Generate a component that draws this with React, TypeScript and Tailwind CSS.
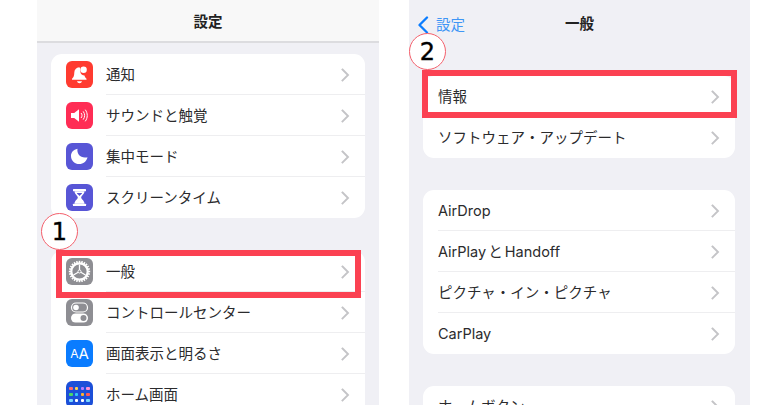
import { ReactNode } from 'react'

const FONT = 'Inter, "Noto Sans CJK JP", sans-serif'

function Chevron() {
  return (
    <svg width="9" height="14" viewBox="0 0 9 14" fill="none" className="shrink-0 mt-[1px]">
      <path d="M1.5 1.5 7 7l-5.5 5.5" stroke="#c4c4c7" strokeWidth="1.9" strokeLinecap="square" />
    </svg>
  )
}

function IconBox({ bg, children }: { bg: string; children: ReactNode }) {
  return (
    <div className={`w-[27px] h-[27px] rounded-[6px] flex items-center justify-center shrink-0 overflow-hidden ${bg}`}>
      {children}
    </div>
  )
}

function BellIcon() {
  return (
    <svg width="21" height="21" viewBox="0 0 21 21" fill="white">
      <path d="M10.2 3.2c-3 .2-4.8 2.4-4.9 5.3-.1 3-.5 4.7-2.3 6.3v1h14.5v-1c-1.1-1-1.7-2-2-3.3-2.6.2-4.6-2.200-4.1-4.900.1-1.300-.1-2.900-1.200-3.400z" />
      <circle cx="14.600" cy="5.700" r="3.200" />
      <path d="M8 17.300h5c-.3 1.200-1.300 1.900-2.500 1.900S8.300 18.500 8 17.300z" />
    </svg>
  )
}

function SoundIcon() {
  return (
    <svg width="21" height="21" viewBox="0 0 21 21" fill="none">
      <path d="M2 8h3.200L10 4.300v12.400L5.200 13H2z" fill="white" />
      <path d="M12.300 8.300c1 1.300 1 3.100 0 4.400M14.400 6.700c1.700 2.300 1.700 5.300 0 7.600M16.500 5c2.400 3.300 2.400 7.700 0 11" stroke="white" strokeWidth="1" strokeLinecap="round" />
    </svg>
  )
}

function MoonIcon() {
  return (
    <svg width="21" height="21" viewBox="0 0 21 21" fill="white">
      <path d="M8.500 2.800c-.9 4.800 2.600 9 7.800 8.800.8 0 1.500-.1 2.200-.4-.9 4-4.300 6.800-8.200 6.800-4.600 0-8.300-3.600-8.300-8.100 0-3.400 2.500-6.200 6.500-7.100z" />
    </svg>
  )
}

function HourglassIcon() {
  return (
    <svg width="21" height="21" viewBox="0 0 21 21" fill="white">
      <rect x="4" y="2" width="13" height="2.300" rx=".6" />
      <rect x="4" y="16.700" width="13" height="2.300" rx=".6" />
      <path d="M5.500 4.300h10c0 3.200-3.300 4.300-3.300 6.200s3.300 3 3.300 6.200h-10c0-3.200 3.300-4.300 3.300-6.200S5.500 7.500 5.500 4.300z" />
      <path d="M7.800 6h5.400c-.5 1.400-2.700 2.300-2.700 3.300 0-1-2.200-1.900-2.700-3.300z" fill="#5856d6" />
    </svg>
  )
}

function GearIcon() {
  const teeth = Array.from({ length: 24 }, (_, i) => i * 15)
  return (
    <svg width="25" height="25" viewBox="0 0 25 25" fill="none">
      {teeth.map(a => (
        <rect key={a} x="11.700" y="1.800" width="1.600" height="3" fill="white" transform={`rotate(${a} 12.500 12.500)`} />
      ))}
      <circle cx="12.500" cy="12.500" r="8.200" stroke="white" strokeWidth="2.200" />
      <circle cx="12.500" cy="12.500" r="1.500" stroke="white" strokeWidth="1" />
      <path d="M12.500 11V5.500M11.200 13.300l-4.700 2.700M13.800 13.300l4.700 2.700" stroke="white" strokeWidth="1.300" />
    </svg>
  )
}

function ToggleIcon() {
  return (
    <svg width="21" height="23" viewBox="0 0 21 23" fill="none">
      <rect x="2.500" y="2" width="16" height="9" rx="4.500" stroke="white" strokeWidth="1.200" />
      <circle cx="7" cy="6.500" r="2.800" fill="white" />
      <rect x="2" y="12.500" width="17" height="9" rx="4.500" fill="white" />
      <circle cx="14.500" cy="17" r="3" fill="#8e8e93" />
    </svg>
  )
}

function HomeIcon() {
  const colors = ['#ff6b6b', '#ffd24d', '#b47cff', '#ff8fd0', '#4cd964', '#35c7f5', '#ffb02e', '#ff5a5a', '#7ad7ff', '#ffffff', '#ffffff', '#7ad7ff']
  return (
    <div className="grid grid-cols-4 gap-x-[2px] gap-y-[2.500px] w-[21px] h-[21px] content-center">
      {colors.map((c, i) => (
        <span key={i} className="w-[3.500px] h-[3.500px] rounded-[1px]" style={{ backgroundColor: c }} />
      ))}
    </div>
  )
}

function Row({ icon, label, last, inset }: { icon?: ReactNode; label: string; last?: boolean; inset: string }) {
  return (
    <div className="flex items-stretch h-[41px]">
      {icon && <div className="w-[55px] pl-[15px] flex items-center shrink-0">{icon}</div>}
      <div className={`flex-1 flex items-center justify-between pr-[15px] border-b-[1.500px] ${inset} ${last ? 'border-transparent' : 'border-[#eeeef0]'}`}>
        <span className="text-[14.500px] text-[#2b2b2d] pt-[1px] [word-spacing:-2px]">{label}</span>
        <Chevron />
      </div>
    </div>
  )
}

function Callout({ n, pos }: { n: number; pos: string }) {
  return (
    <div className={`absolute w-[37px] h-[37px] rounded-full bg-white border-[1.500px] border-[#f4606c] flex items-center justify-center text-[24px] text-black [-webkit-text-stroke:0.4px_black] ${pos}`} style={{ fontFamily: '"DejaVu Sans", sans-serif' }}>
      {n}
    </div>
  )
}

function RedBox({ pos }: { pos: string }) {
  return <div className={`absolute border-[6px] border-[#fb4152] ${pos}`} />
}

export default function App() {
  return (
    <div className="relative w-[773px] h-[405px] overflow-hidden bg-white flex pl-[37px] gap-[30px]" style={{ fontFamily: FONT }}>
      <section className="w-[342px] h-full bg-[#f0f0f5]">
        <header className="h-[43px] bg-[#f8f8f8] border-b-2 border-[#dcdcdf] flex items-center justify-center pt-[3px]">
          <h1 className="text-[14.500px] font-bold text-[#222]">設定</h1>
        </header>
        <div className="px-[14px] pt-[11px] flex flex-col gap-[33px]">
          <div className="bg-white rounded-[11px] overflow-hidden">
            <Row inset="" label="通知" icon={<IconBox bg="bg-[#ff3b30]"><BellIcon /></IconBox>} />
            <Row inset="" label="サウンドと触覚" icon={<IconBox bg="bg-[#ff2d55]"><SoundIcon /></IconBox>} />
            <Row inset="" label="集中モード" icon={<IconBox bg="bg-[#5856d6]"><MoonIcon /></IconBox>} />
            <Row inset="" last label="スクリーンタイム" icon={<IconBox bg="bg-[#5856d6]"><HourglassIcon /></IconBox>} />
          </div>
          <div className="bg-white rounded-t-[11px] overflow-hidden">
            <Row inset="" label="一般" icon={<IconBox bg="bg-[#8e8e93]"><GearIcon /></IconBox>} />
            <Row inset="" label="コントロールセンター" icon={<IconBox bg="bg-[#8e8e93]"><ToggleIcon /></IconBox>} />
            <Row inset="" label="画面表示と明るさ" icon={<IconBox bg="bg-[#0a7cff]"><span className="text-white text-[12px] leading-none">A</span><span className="text-white text-[15px] leading-none">A</span></IconBox>} />
            <Row inset="" last label="ホーム画面" icon={<IconBox bg="bg-[#1c4fd8]"><HomeIcon /></IconBox>} />
          </div>
        </div>
      </section>

      <section className="w-[341px] h-full bg-[#f0f0f5]">
        <header className="h-[43px] relative flex items-center justify-center pt-[5px]">
          <div className="absolute left-[8px] top-[14px] flex items-center gap-[7px] text-[#3f96f5] text-[14.500px]">
            <svg width="12" height="18" viewBox="0 0 12 18" fill="none">
              <path d="M10 1.500 2.500 9l7.500 7.500" stroke="#0a7cff" strokeWidth="2.300" strokeLinecap="round" strokeLinejoin="round" />
            </svg>
            <span>設定</span>
          </div>
          <h2 className="text-[14.500px] font-bold text-[#222]">一般</h2>
        </header>
        <div className="pl-[14px] pr-[15px] pt-[33px] flex flex-col gap-[32px]">
          <div className="bg-white rounded-[11px] overflow-hidden">
            <Row inset="ml-[15px]" label="情報" />
            <Row inset="ml-[15px]" last label="ソフトウェア・アップデート" />
          </div>
          <div className="bg-white rounded-[11px] overflow-hidden">
            <Row inset="ml-[15px]" label="AirDrop" />
            <Row inset="ml-[15px]" label="AirPlay と Handoff" />
            <Row inset="ml-[15px]" label="ピクチャ・イン・ピクチャ" />
            <Row inset="ml-[15px]" last label="CarPlay" />
          </div>
          <div className="bg-white rounded-t-[11px] overflow-hidden">
            <Row inset="ml-[15px]" last label="ホームボタン" />
          </div>
        </div>
      </section>

      <RedBox pos="left-[56px] top-[250px] w-[305px] h-[48px]" />
      <RedBox pos="left-[422px] top-[70px] w-[315px] h-[48px]" />
      <Callout n={1} pos="left-[41px] top-[213px]" />
      <Callout n={2} pos="left-[409px] top-[33px]" />
    </div>
  )
}
